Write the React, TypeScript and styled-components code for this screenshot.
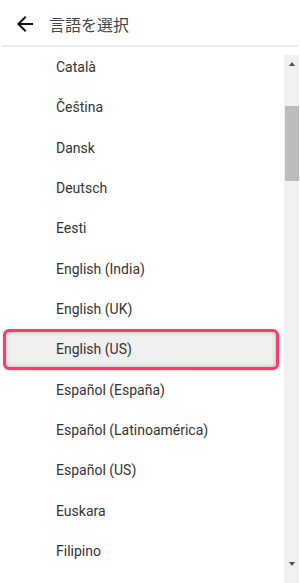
import React from 'react';
import styled, { createGlobalStyle } from 'styled-components';

const GlobalStyle = createGlobalStyle`
    html, body {
        margin: 0;
        padding: 0;
        background: #ffffff;
        font-family: Roboto, "Noto Sans CJK JP", sans-serif;
    }
`;

const Screen = styled.div`
    width: 300px;
    height: 583px;
    display: flex;
    flex-direction: column;
    overflow: hidden;
    background: #ffffff;
`;

const Header = styled.header`
    height: 47px;
    flex-shrink: 0;
    display: flex;
    align-items: center;
    gap: 12px;
    padding: 0 12px 0 11px;
    border-bottom: 2px solid #ededed;
    box-sizing: border-box;
    margin: 0 2px;
`;

const BackButton = styled.button`
    border: none;
    background: transparent;
    padding: 0;
    display: flex;
    align-items: center;
    margin-top: 2px;
`;

const Title = styled.h1`
    margin: 2px 0 0;
    font-size: 16px;
    font-weight: 400;
    color: #444444;
    font-family: "Noto Sans CJK JP", sans-serif;
`;

const Body = styled.div`
    flex: 1;
    display: flex;
    min-height: 0;
`;

const List = styled.ul`
    flex: 1;
    list-style: none;
    margin: 0;
    padding: 0;
    overflow: hidden;
`;

const Row = styled.li<{ $selected?: boolean }>`
    height: 40.33px;
    box-sizing: border-box;
    display: flex;
    align-items: center;
    margin: 0 5px 0 3px;
    padding-left: ${(p) => (p.$selected ? '50px' : '53px')};
    font-size: 14px;
    color: #333333;
    border-radius: 6px;
    border: ${(p) => (p.$selected ? '3px solid #ff3a6b' : 'none')};
    background: ${(p) => (p.$selected ? '#efefef' : 'transparent')};
    box-shadow: ${(p) =>
        p.$selected ? 'inset 0 0 4px rgba(0,0,0,0.25), 0 1px 3px rgba(0,0,0,0.15)' : 'none'};
`;

const ScrollTrack = styled.div`
    width: 15px;
    margin: 8px 1px 0 0;
    background: #f1f1f1;
    display: flex;
    flex-direction: column;
    align-items: center;
`;

const ScrollArrow = styled.div<{ $down?: boolean }>`
    width: 0;
    height: 0;
    border-left: 3.5px solid transparent;
    border-right: 3.5px solid transparent;
    ${(p) => (p.$down ? 'border-top: 4px solid #505050;' : 'border-bottom: 4px solid #505050;')}
    margin: ${(p) => (p.$down ? 'auto 0 17px' : '7px 0 0')};
`;

const ScrollThumb = styled.div`
    width: 14px;
    margin-left: 1px;
    height: 75px;
    margin-top: 40px;
    background: #bcbcbc;
`;

const languages = [
    'Català',
    'Čeština',
    'Dansk',
    'Deutsch',
    'Eesti',
    'English (India)',
    'English (UK)',
    'English (US)',
    'Español (España)',
    'Español (Latinoamérica)',
    'Español (US)',
    'Euskara',
    'Filipino',
];

function App() {
    const selected = 'English (US)';
    return (
        <>
            <GlobalStyle />
            <Screen>
                <Header>
                    <BackButton aria-label="back">
                        <svg width="24" height="24" viewBox="0 0 24 24">
                            <path
                                d="M20 11H7.83l5.59-5.59L12 4l-8 8 8 8 1.41-1.41L7.83 13H20v-2z"
                                fill="#111111"
                            />
                        </svg>
                    </BackButton>
                    <Title>言語を選択</Title>
                </Header>
                <Body>
                    <List>
                        {languages.map((lang) => (
                            <Row key={lang} $selected={lang === selected}>
                                {lang}
                            </Row>
                        ))}
                    </List>
                    <ScrollTrack>
                        <ScrollArrow />
                        <ScrollThumb />
                        <ScrollArrow $down />
                    </ScrollTrack>
                </Body>
            </Screen>
        </>
    );
}

export default App;
